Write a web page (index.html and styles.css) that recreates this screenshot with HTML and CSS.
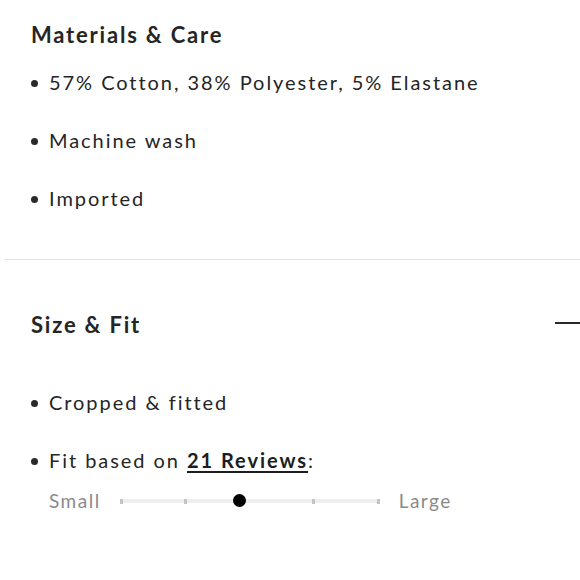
FILE: index.html
```html
<!DOCTYPE html>
<html>
<head>
<meta charset="utf-8">
<link rel="stylesheet" href="styles.css">
</head>
<body>
<div class="page">
  <section class="section first">
    <h2 class="title">Materials &amp; Care</h2>
    <ul class="list">
      <li class="item">57% Cotton, 38% Polyester, 5% Elastane</li>
      <li class="item">Machine wash</li>
      <li class="item">Imported</li>
    </ul>
  </section>
  <div class="divider"></div>
  <section class="section second">
    <div class="head">
      <h2 class="title">Size &amp; Fit</h2>
      <span class="minus"></span>
    </div>
    <ul class="list">
      <li class="item">Cropped &amp; fitted</li>
      <li class="item"><span>Fit based on <a class="reviews" href="#">21 Reviews</a>:</span></li>
    </ul>
    <div class="fit">
      <span class="label">Small</span>
      <div class="track">
        <span class="tick"></span>
        <span class="tick"></span>
        <span class="tick hidden"></span>
        <span class="tick"></span>
        <span class="tick"></span>
        <span class="dot"></span>
      </div>
      <span class="label">Large</span>
    </div>
  </section>
</div>
</body>
</html>
```
FILE: styles.css
```css
* { box-sizing: border-box; }
html, body { margin: 0; padding: 0; background: #fff; }
body {
  font-family: "Lato", "Open Sans", sans-serif;
  color: #252525;
}
.page { width: 580px; overflow: hidden; }
.section { padding-left: 31px; }
.first { padding-top: 20px; padding-bottom: 47px; }
.divider { height: 1px; margin-left: 4px; background: #e4e4e4; }
.second { padding-top: 50px; }
.title {
  margin: 0;
  font-size: 22px;
  line-height: 30px;
  font-weight: 700;
  letter-spacing: 1.8px;
}
.head { display: flex; align-items: center; justify-content: space-between; }
.minus {
  width: 25px;
  height: 2px;
  background: #2a2a2a;
  margin-top: -4px;
}
.list { list-style: none; margin: 18px 0 0; padding: 0; }
.second .list { margin-top: 48px; }
.item {
  display: flex;
  align-items: center;
  font-size: 20px;
  line-height: 28px;
  letter-spacing: 1.95px;
  margin-bottom: 30px;
}
.item:last-child { margin-bottom: 0; }
.item::before {
  content: "";
  width: 7px;
  height: 7px;
  border-radius: 50%;
  background: #2a2a2a;
  margin-right: 11px;
  margin-top: 2px;
  flex: none;
}
.reviews {
  color: #1d1d1d;
  font-weight: 700;
  text-decoration: underline;
  text-decoration-thickness: 2px;
  text-underline-offset: 3px;
}
.fit {
  display: flex;
  align-items: center;
  margin-top: 14px;
  padding-left: 18px;
  height: 24px;
}
.label {
  font-size: 19px;
  letter-spacing: 1.5px;
  color: #8a8a8a;
}
.track {
  position: relative;
  width: 260px;
  height: 4px;
  margin: 2px 19px 0;
  background: #eeeeee;
  display: flex;
  justify-content: space-between;
  align-items: center;
}
.tick { width: 3px; height: 5px; background: #c4c4c4; }
.tick.hidden { visibility: hidden; }
.dot {
  position: absolute;
  left: 113px;
  top: -5px;
  width: 13px;
  height: 13px;
  border-radius: 50%;
  background: #000;
}
```
